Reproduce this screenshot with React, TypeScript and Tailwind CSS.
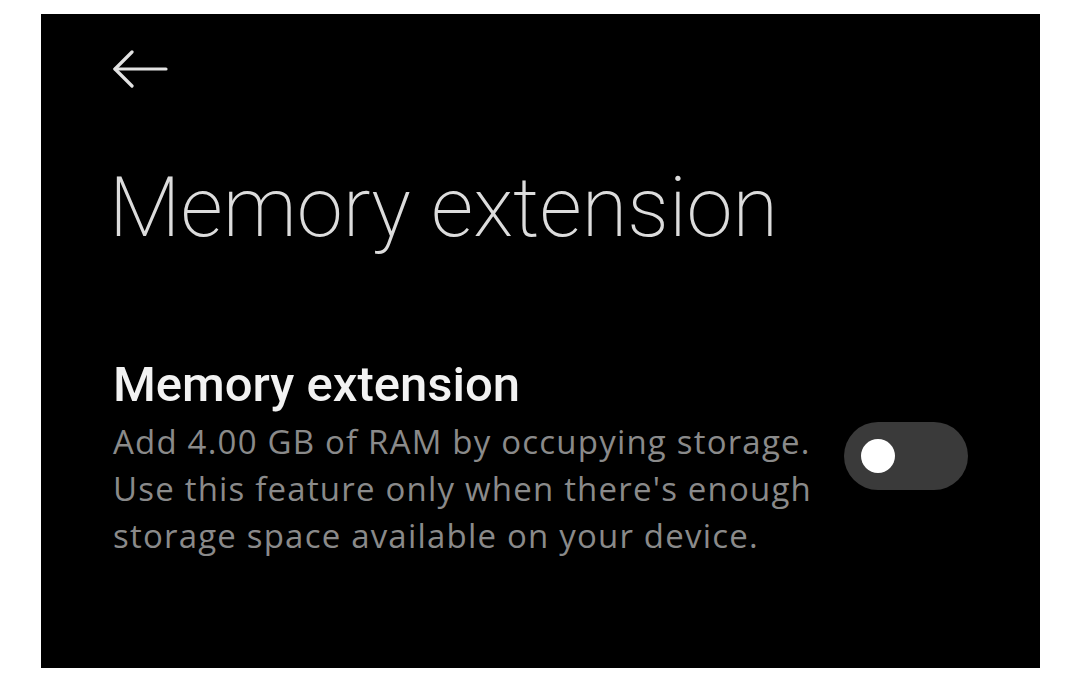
export default function App() {
  return (
    <div className="w-[1080px] h-[692px] bg-white pt-[14px] pl-[41px]" style={{ fontFamily: "Roboto, 'Noto Sans', sans-serif" }}>
      <div className="w-[999px] h-[654px] bg-black flex flex-col pl-[72px]">
        <div className="h-[112px] flex items-center">
          <svg width="56" height="40" viewBox="0 0 56 40" fill="none" stroke="#e2e2e2" strokeWidth="3.2" strokeLinecap="round" strokeLinejoin="round" className="mt-[-2px]">
            <path d="M2 20H53" />
            <path d="M19 3L2 20L19 37" />
          </svg>
        </div>
        <h1 className="text-[83px] font-extralight text-[#dcdcdc] leading-none mt-[40px] ml-[-4px]">
          Memory extension
        </h1>
        <div className="flex items-center mt-[108px] pr-[72px]">
          <div className="flex-1">
            <div className="text-[49px] font-medium text-[#f2f2f2] leading-[56px] mb-[5px]">Memory extension</div>
            <p className="text-[33px] text-[#8a8a8a] leading-[47px] tracking-[1.2px] whitespace-nowrap font-['Open_Sans',sans-serif]">
              Add 4.00 GB of RAM by occupying storage.
              <br />
              Use this feature only when there's enough
              <br />
              storage space available on your device.
            </p>
          </div>
          <div className="w-[124px] h-[68px] rounded-full bg-[#3a3a3a] flex items-center pl-[17px] mt-[-4px]">
            <div className="w-[34px] h-[34px] rounded-full bg-white" />
          </div>
        </div>
      </div>
    </div>
  );
}
